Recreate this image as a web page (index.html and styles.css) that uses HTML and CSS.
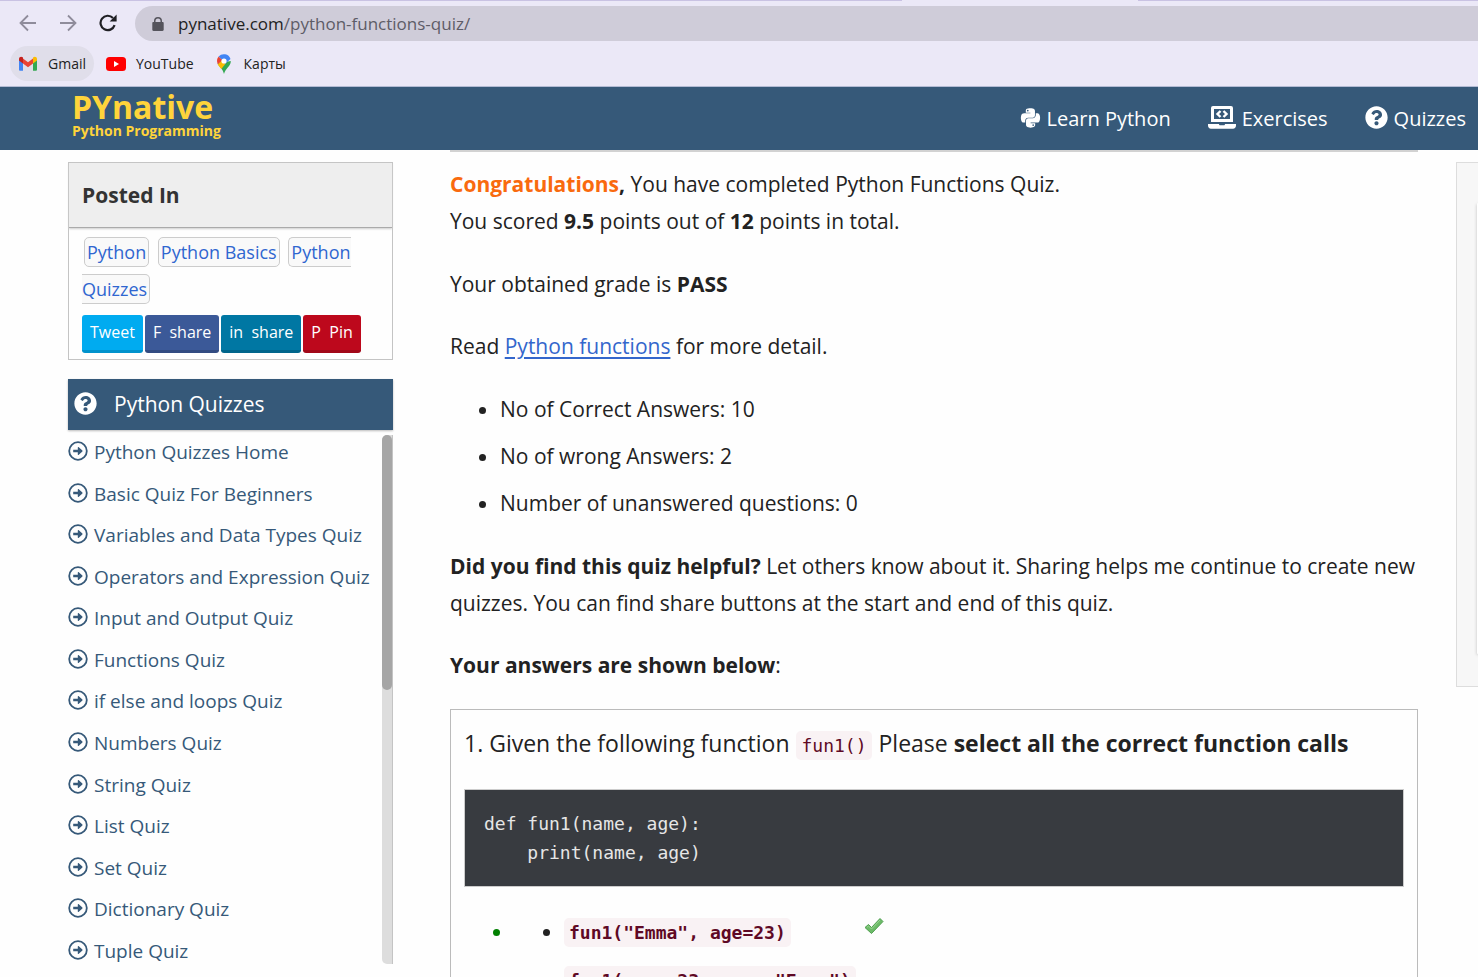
FILE: index.html
```html
<!DOCTYPE html>
<html lang="en">
<head>
<meta charset="utf-8">
<title>Python Functions Quiz</title>
<link rel="stylesheet" href="styles.css">
</head>
<body>
<svg class="sprite" aria-hidden="true">
  <symbol id="question" viewBox="0 0 512 512"><path fill="currentColor" d="M504 256c0 136.997-111.043 248-248 248S8 392.997 8 256C8 119.083 119.043 8 256 8s248 111.083 248 248zM262.655 90c-54.497 0-89.255 22.957-116.549 63.758-3.536 5.286-2.353 12.415 2.715 16.258l34.699 26.31c5.205 3.947 12.621 3.008 16.665-2.122 17.864-22.658 30.113-35.797 57.303-35.797 20.429 0 45.698 13.148 45.698 32.958 0 14.976-12.363 22.667-32.534 33.976C247.128 238.528 216 254.941 216 296v4c0 6.627 5.373 12 12 12h56c6.627 0 12-5.373 12-12v-1.333c0-28.462 83.186-29.647 83.186-106.667 0-58.002-60.165-102-116.531-102zM256 338c-25.365 0-46 20.635-46 46 0 25.364 20.635 46 46 46s46-20.636 46-46c0-25.365-20.635-46-46-46z"/></symbol>
  <symbol id="arrow" viewBox="0 0 20 20"><circle cx="10" cy="10" r="8.800" fill="none" stroke="currentColor" stroke-width="1.800"/><path fill="currentColor" d="M5.200 8.800h4.600V6.600c0-.6.6-.8 1-.4l3.600 3.400c.2.2.2.6 0 .8l-3.600 3.400c-.4.4-1 .2-1-.4v-2.200H5.200z"/></symbol>
</svg>

<header class="browser">
  <div class="toolbar">
    <button class="tool" aria-label="Back"><svg width="18" height="18" viewBox="0 0 18 18" fill="none" stroke="#8f8c9b" stroke-width="1.800"><path d="M17 9H2M9 1.500 1.500 9 9 16.500"/></svg></button>
    <button class="tool" aria-label="Forward"><svg width="18" height="18" viewBox="0 0 18 18" fill="none" stroke="#8f8c9b" stroke-width="1.800"><path d="M1 9h15M9 1.500 16.500 9 9 16.500"/></svg></button>
    <button class="tool" aria-label="Reload"><svg width="18" height="18" viewBox="0 0 18 18"><path d="M15.600 11.200A7.200 7.200 0 1 1 14 4" fill="none" stroke="#1f1f24" stroke-width="2.200"/><path d="M17.600.5v7h-7z" fill="#1f1f24"/></svg></button>
    <div class="address">
      <svg width="12" height="14" viewBox="0 0 12 14"><path fill="#55545c" d="M2 5V4a4 4 0 0 1 8 0v1h.5c.8 0 1.200.5 1.200 1.200v6.600c0 .7-.5 1.200-1.200 1.200h-9C.7 14 .3 13.500.3 12.800V6.200C.3 5.500.7 5 1.500 5zm1.500 0h5V4a2.500 2.500 0 0 0-5 0z"/></svg>
      <span class="url">pynative.com<span class="path">/python-functions-quiz/</span></span>
    </div>
  </div>
  <nav class="bookmarks">
    <a class="bookmark active" href="#"><svg width="20" height="16" viewBox="0 0 20 16"><path fill="#4285f4" d="M1 3v10.500c0 .8.500 1.300 1.300 1.300H5V6z"/><path fill="#34a853" d="M19 3v10.500c0 .8-.5 1.300-1.300 1.300H15V6z"/><path fill="#ea4335" d="M5 2.500 10 6.300l5-3.800v5L10 11.300 5 7.500z"/><path fill="#c5221f" d="M1 3c0-2 2.200-2.900 3.700-1.700L5 1.500v6L1 4.500z"/><path fill="#fbbc04" d="M19 3c0-2-2.200-2.900-3.700-1.700L15 1.500v6l4-3z"/></svg>Gmail</a>
    <a class="bookmark" href="#"><svg width="20" height="16" viewBox="0 0 20 16"><rect y="1" width="20" height="14" rx="3.500" fill="#f00"/><path d="M8 5v6l5-3z" fill="#fff"/></svg>YouTube</a>
    <a class="bookmark" href="#"><svg width="20" height="20" viewBox="0 0 16 20"><path fill="#34a853" d="M1.500 9.500C3 13 6.500 14 8 20c1.500-6 6.800-7.500 6.800-13z"/><path fill="#fbbc04" d="M1.800 10.200C3 12.500 4.300 13.500 5.300 14.900l5.200-6.300L6 5z"/><path fill="#ea4335" d="M2.600 2.600 6.500 6 1.800 10.200C.5 7.500.8 4.700 2.600 2.600z"/><path fill="#4285f4" d="M2.600 2.600A7 7 0 0 1 14.500 5L9 10 5.300 5z"/><circle cx="8" cy="7" r="2.600" fill="#fff"/></svg>Карты</a>
  </nav>
</header>

<header class="site">
  <a class="brand" href="#"><span class="name">PYnative</span><span class="tagline">Python Programming</span></a>
  <nav class="menu">
    <a href="#"><svg width="21" height="22" viewBox="0 0 448 512"><path fill="currentColor" d="M439.800 200.500c-7.700-30.900-22.300-54.200-53.400-54.200h-40.100v47.400c0 36.800-31.200 67.800-66.800 67.800H172.700c-29.200 0-53.400 25-53.400 54.300v101.800c0 29 25.200 46 53.400 54.300 33.800 9.900 66.300 11.700 106.800 0 26.900-7.800 53.400-23.500 53.400-54.300v-40.700H226.200v-13.600h160.200c31.100 0 42.600-21.700 53.400-54.200 11.200-33.500 10.700-65.700 0-108.600zM286.200 404c11.100 0 20.100 9.100 20.100 20.300 0 11.300-9 20.400-20.100 20.400-11 0-20.100-9.200-20.100-20.400.1-11.300 9.100-20.300 20.100-20.300zM167.800 248.100h106.800c29.700 0 53.400-24.500 53.400-54.300V91.900c0-29-24.400-50.700-53.400-55.600-35.800-5.900-74.700-5.600-106.800.1-45.200 8-53.400 24.700-53.400 55.600v40.700h106.900v13.600h-147c-31.100 0-58.300 18.700-66.800 54.200-9.800 40.700-10.200 66.100 0 108.600 7.600 31.600 25.700 54.200 56.800 54.200H101v-48.800c0-35.300 30.500-66.400 66.800-66.400zm-6.700-142.600c-11.100 0-20.100-9.100-20.100-20.300.1-11.300 9-20.400 20.100-20.400 11 0 20.100 9.200 20.100 20.400s-9 20.300-20.100 20.300z"/></svg>Learn Python</a>
    <a href="#"><svg width="28" height="23" viewBox="0 0 28 23"><path fill="currentColor" fill-rule="evenodd" d="M5 0h18a2 2 0 0 1 2 2v14H3V2a2 2 0 0 1 2-2zm1 3v10h16V3z"/><path fill="currentColor" d="M0 18h11c0 .8.500 1.300 1.200 1.300h3.600c.7 0 1.200-.5 1.200-1.300h11v1.500c0 1.800-1.200 3.200-3 3.200H3c-1.800 0-3-1.400-3-3.200z"/><path fill="none" stroke="currentColor" stroke-width="2.400" d="M12.500 5 9.500 8l3 3M15.500 5l3 3-3 3"/></svg>Exercises</a>
    <a href="#"><svg width="23" height="23"><use href="#question"/></svg>Quizzes</a>
  </nav>
</header>

<div class="page">
  <aside class="sidebar">
    <section class="posted">
      <h2>Posted In</h2>
      <div class="posted-body">
        <div class="tags"><a href="#">Python</a> <a href="#">Python Basics</a> <a href="#">Python Quizzes</a></div>
        <div class="share">
          <a class="tweet" href="#">Tweet</a>
          <a class="facebook" href="#">F&nbsp; share</a>
          <a class="linkedin" href="#">in&nbsp; share</a>
          <a class="pin" href="#">P&nbsp; Pin</a>
        </div>
      </div>
    </section>
    <section class="quizzes">
      <h2><svg width="23" height="23"><use href="#question"/></svg>Python Quizzes</h2>
      <div class="scroller">
        <ul>
          <li><a href="#"><svg width="20" height="20"><use href="#arrow"/></svg>Python Quizzes Home</a></li>
          <li><a href="#"><svg width="20" height="20"><use href="#arrow"/></svg>Basic Quiz For Beginners</a></li>
          <li><a href="#"><svg width="20" height="20"><use href="#arrow"/></svg>Variables and Data Types Quiz</a></li>
          <li><a href="#"><svg width="20" height="20"><use href="#arrow"/></svg>Operators and Expression Quiz</a></li>
          <li><a href="#"><svg width="20" height="20"><use href="#arrow"/></svg>Input and Output Quiz</a></li>
          <li><a href="#"><svg width="20" height="20"><use href="#arrow"/></svg>Functions Quiz</a></li>
          <li><a href="#"><svg width="20" height="20"><use href="#arrow"/></svg>if else and loops Quiz</a></li>
          <li><a href="#"><svg width="20" height="20"><use href="#arrow"/></svg>Numbers Quiz</a></li>
          <li><a href="#"><svg width="20" height="20"><use href="#arrow"/></svg>String Quiz</a></li>
          <li><a href="#"><svg width="20" height="20"><use href="#arrow"/></svg>List Quiz</a></li>
          <li><a href="#"><svg width="20" height="20"><use href="#arrow"/></svg>Set Quiz</a></li>
          <li><a href="#"><svg width="20" height="20"><use href="#arrow"/></svg>Dictionary Quiz</a></li>
          <li><a href="#"><svg width="20" height="20"><use href="#arrow"/></svg>Tuple Quiz</a></li>
        </ul>
        <div class="track"><div class="thumb"></div></div>
      </div>
    </section>
  </aside>

  <main class="result">
    <p class="intro"><strong><span class="congrats">Congratulations</span>,</strong> You have completed Python Functions Quiz.<br>You scored <strong>9.5</strong> points out of <strong>12</strong> points in total.</p>
    <p>Your obtained grade is <strong>PASS</strong></p>
    <p>Read <a href="#">Python functions</a> for more detail.</p>
    <ul class="stats">
      <li>No of Correct Answers: 10</li>
      <li>No of wrong Answers: 2</li>
      <li>Number of unanswered questions: 0</li>
    </ul>
    <p><strong>Did you find this quiz helpful?</strong> Let others know about it. Sharing helps me continue to create new quizzes. You can find share buttons at the start and end of this quiz.</p>
    <p><strong>Your answers are shown below</strong>:</p>
    <section class="question">
      <p class="prompt">1. Given the following function <code>fun1()</code> Please <strong>select all the correct function calls</strong></p>
      <pre>def fun1(name, age):
    print(name, age)</pre>
      <ul class="answers">
        <li>
          <ul class="options">
            <li><code>fun1("Emma", age=23)</code></li>
            <li><code>fun1(age =23, name="Emma")</code></li>
          </ul>
          <svg class="check" width="20" height="18" viewBox="0 0 20 18"><path d="M1 10.500 4.500 7.500 7.500 10.500 16 1.500 19 4.500 7.500 16.500z" fill="#6dbb68" stroke="#4f9f50" stroke-width="1" stroke-linejoin="round"/><path d="M3 10.300 4.500 9l3 3L16 3" fill="none" stroke="#9ad492"/></svg>
        </li>
      </ul>
    </section>
  </main>

  <aside class="promo"><div class="promo-card"></div></aside>
</div>
</body>
</html>
```
FILE: styles.css
```css
* { box-sizing: border-box; }

body {
  margin: 0;
  height: 100vh;
  overflow: hidden;
  display: flex;
  flex-direction: column;
  background: #fefefe;
  color: #222;
  font-family: "Open Sans", "Noto Sans", sans-serif;
  font-size: 21px;
  line-height: 37px;
}

a { color: inherit; text-decoration: none; }
svg { flex: none; }
.sprite { position: absolute; width: 0; height: 0; }

/* Browser chrome */
.browser {
  flex: none;
  height: 87px;
  padding-top: 6px;
  background: linear-gradient(90deg, #c9c2e3 61%, #ebe8f7 61%, #ebe8f7 77%, #c9c2e3 77%) top / 100% 1px no-repeat #ebe8f7;
  border-bottom: 1px solid #b3bbd4;
}
.toolbar { display: flex; align-items: center; height: 35px; padding-left: 19px; }
.tool {
  display: flex;
  width: 18px;
  margin-right: 22px;
  padding: 0 0 2px;
  border: 0;
  background: none;
}
.tool:nth-child(3) { margin-right: 18px; }
.address {
  flex: 1;
  display: flex;
  align-items: center;
  gap: 14px;
  height: 35px;
  padding-left: 17px;
  border-radius: 18px 0 0 18px;
  background: #cfccd9;
}
.url { font-size: 17px; color: #222; }
.path { color: #5e5c67; }
.bookmarks { display: flex; align-items: center; gap: 4px; height: 45px; padding-left: 10px; }
.bookmark {
  display: flex;
  align-items: center;
  gap: 10px;
  height: 35px;
  padding: 0 8px;
  border-radius: 18px;
  font-size: 14px;
}
.bookmark.active { background: #e0deea; }

/* Site header */
.site {
  flex: none;
  display: flex;
  justify-content: space-between;
  align-items: center;
  height: 63px;
  padding: 0 12px 0 72px;
  background: #365979;
  color: #fff;
}
.brand { display: flex; flex-direction: column; padding-bottom: 7px; color: #ffd43b; font-weight: 700; }
.name { font-size: 32px; line-height: 32px; }
.tagline { font-size: 14px; line-height: 16px; }
.menu { display: flex; gap: 37px; font-size: 20px; line-height: 36px; }
.menu a { display: flex; align-items: center; gap: 6px; }
.menu svg { margin-bottom: 2px; }

/* Page columns */
.page {
  flex: 1;
  min-height: 0;
  display: grid;
  grid-template-columns: 325px minmax(0, 1fr) 22px;
  align-items: start;
  padding-left: 68px;
}
.sidebar { padding-top: 12px; }

.posted { border: 1px solid #c4c4c4; margin-bottom: 19px; }
.posted h2 {
  margin: 0;
  padding: 14px 13px 13px;
  background: #eee;
  border-bottom: 1px solid #aaa;
  box-shadow: 0 1px 2px #ccc;
  color: #333;
  font-size: 21px;
  line-height: 37px;
}
.posted-body { padding: 6px 13px; }
.tags { font-size: 18px; color: #2f66d0; }
.tags a {
  margin: 0 2px;
  padding: 2px;
  border: 1px solid #ccc;
  border-radius: 5px;
  background: #f9f9f9;
}
.share { display: flex; gap: 2px; margin-top: 7px; color: #fff; font-size: 16px; line-height: 35px; }
.share a { padding: 0 8px; border-radius: 3px; border-bottom: 3px solid; white-space: nowrap; }
.share .tweet { background: #00abf0; border-color: #0092cc; }
.share .facebook { background: #3b5998; border-color: #324b81; }
.share .linkedin { background: #0077a3; border-color: #00658b; }
.share .pin { background: #bd081c; border-color: #a10718; }

.quizzes h2 {
  display: flex;
  align-items: center;
  gap: 17px;
  height: 51px;
  margin: 0 0 2px;
  padding-left: 6px;
  background: #365979;
  box-shadow: 0 1px 2px #bbb;
  color: #fff;
  font-size: 21px;
  font-weight: 400;
}
.quizzes svg { margin-bottom: 3px; }
.scroller { display: flex; justify-content: space-between; height: 540px; }
.scroller ul {
  display: flex;
  flex-direction: column;
  margin: 0;
  padding: 0;
  list-style: none;
  color: #365979;
  font-size: 19px;
  white-space: nowrap;
}
.scroller li { flex: 1; display: flex; align-items: center; }
.scroller li a { display: flex; align-items: center; gap: 6px; }
.track {
  width: 11px;
  margin: 3px 0 8px;
  border-right: 1px solid #c4c4c4;
  border-radius: 5px 0 0 5px;
  background: #ddd;
}
.thumb { width: 10px; height: 255px; border-radius: 5px; background: #a6a6a6; }

/* Result column */
.result {
  margin: 0 38px 0 57px;
  padding-top: 14px;
  border-top: 2px solid #d2d2d2;
}
.result p { margin: 0 0 25px; }
.result .intro { margin-bottom: 26px; }
.result p a { color: #3366cc; text-decoration: underline; text-underline-offset: 3px; }
.congrats { color: #f96a0e; }
.stats { margin: 26px 0; padding-left: 50px; }
.stats li + li { margin-top: 10px; }

.question { padding: 15px 13px; border: 1px solid #bbb; }
.question .prompt { margin-bottom: 27px; font-size: 23px; }
code, pre { font-family: "DejaVu Sans Mono", monospace; font-size: 18px; line-height: 29px; }
code { padding: 4px 5px; border-radius: 5px; background: #f9f2f4; color: #5f0925; }
pre { margin: 0 0 26px; padding: 19px; border: 1px solid #ccc; background: #383b40; color: #e6e6e6; }
.prompt code { margin: 0 1px; }
.answers { margin: 0; padding-left: 50px; }
.answers > li { color: #008000; }
.options { display: inline-block; width: 345px; margin: 0; padding-left: 50px; list-style: disc; color: #222; vertical-align: top; }
.options li { margin-bottom: 11px; white-space: nowrap; }
.options code { font-weight: 700; }
.check { vertical-align: top; margin-top: 4px; }

/* Right-hand panel */
.promo {
  margin-top: 12px;
  padding: 40px 0 32px 20px;
  border: 1px solid #ddd;
  border-right: 0;
  background: #f7f7f7;
}
.promo-card { height: 451px; border-radius: 6px 0 0 6px; background: #fff; box-shadow: 0 1px 3px #999; }
```
